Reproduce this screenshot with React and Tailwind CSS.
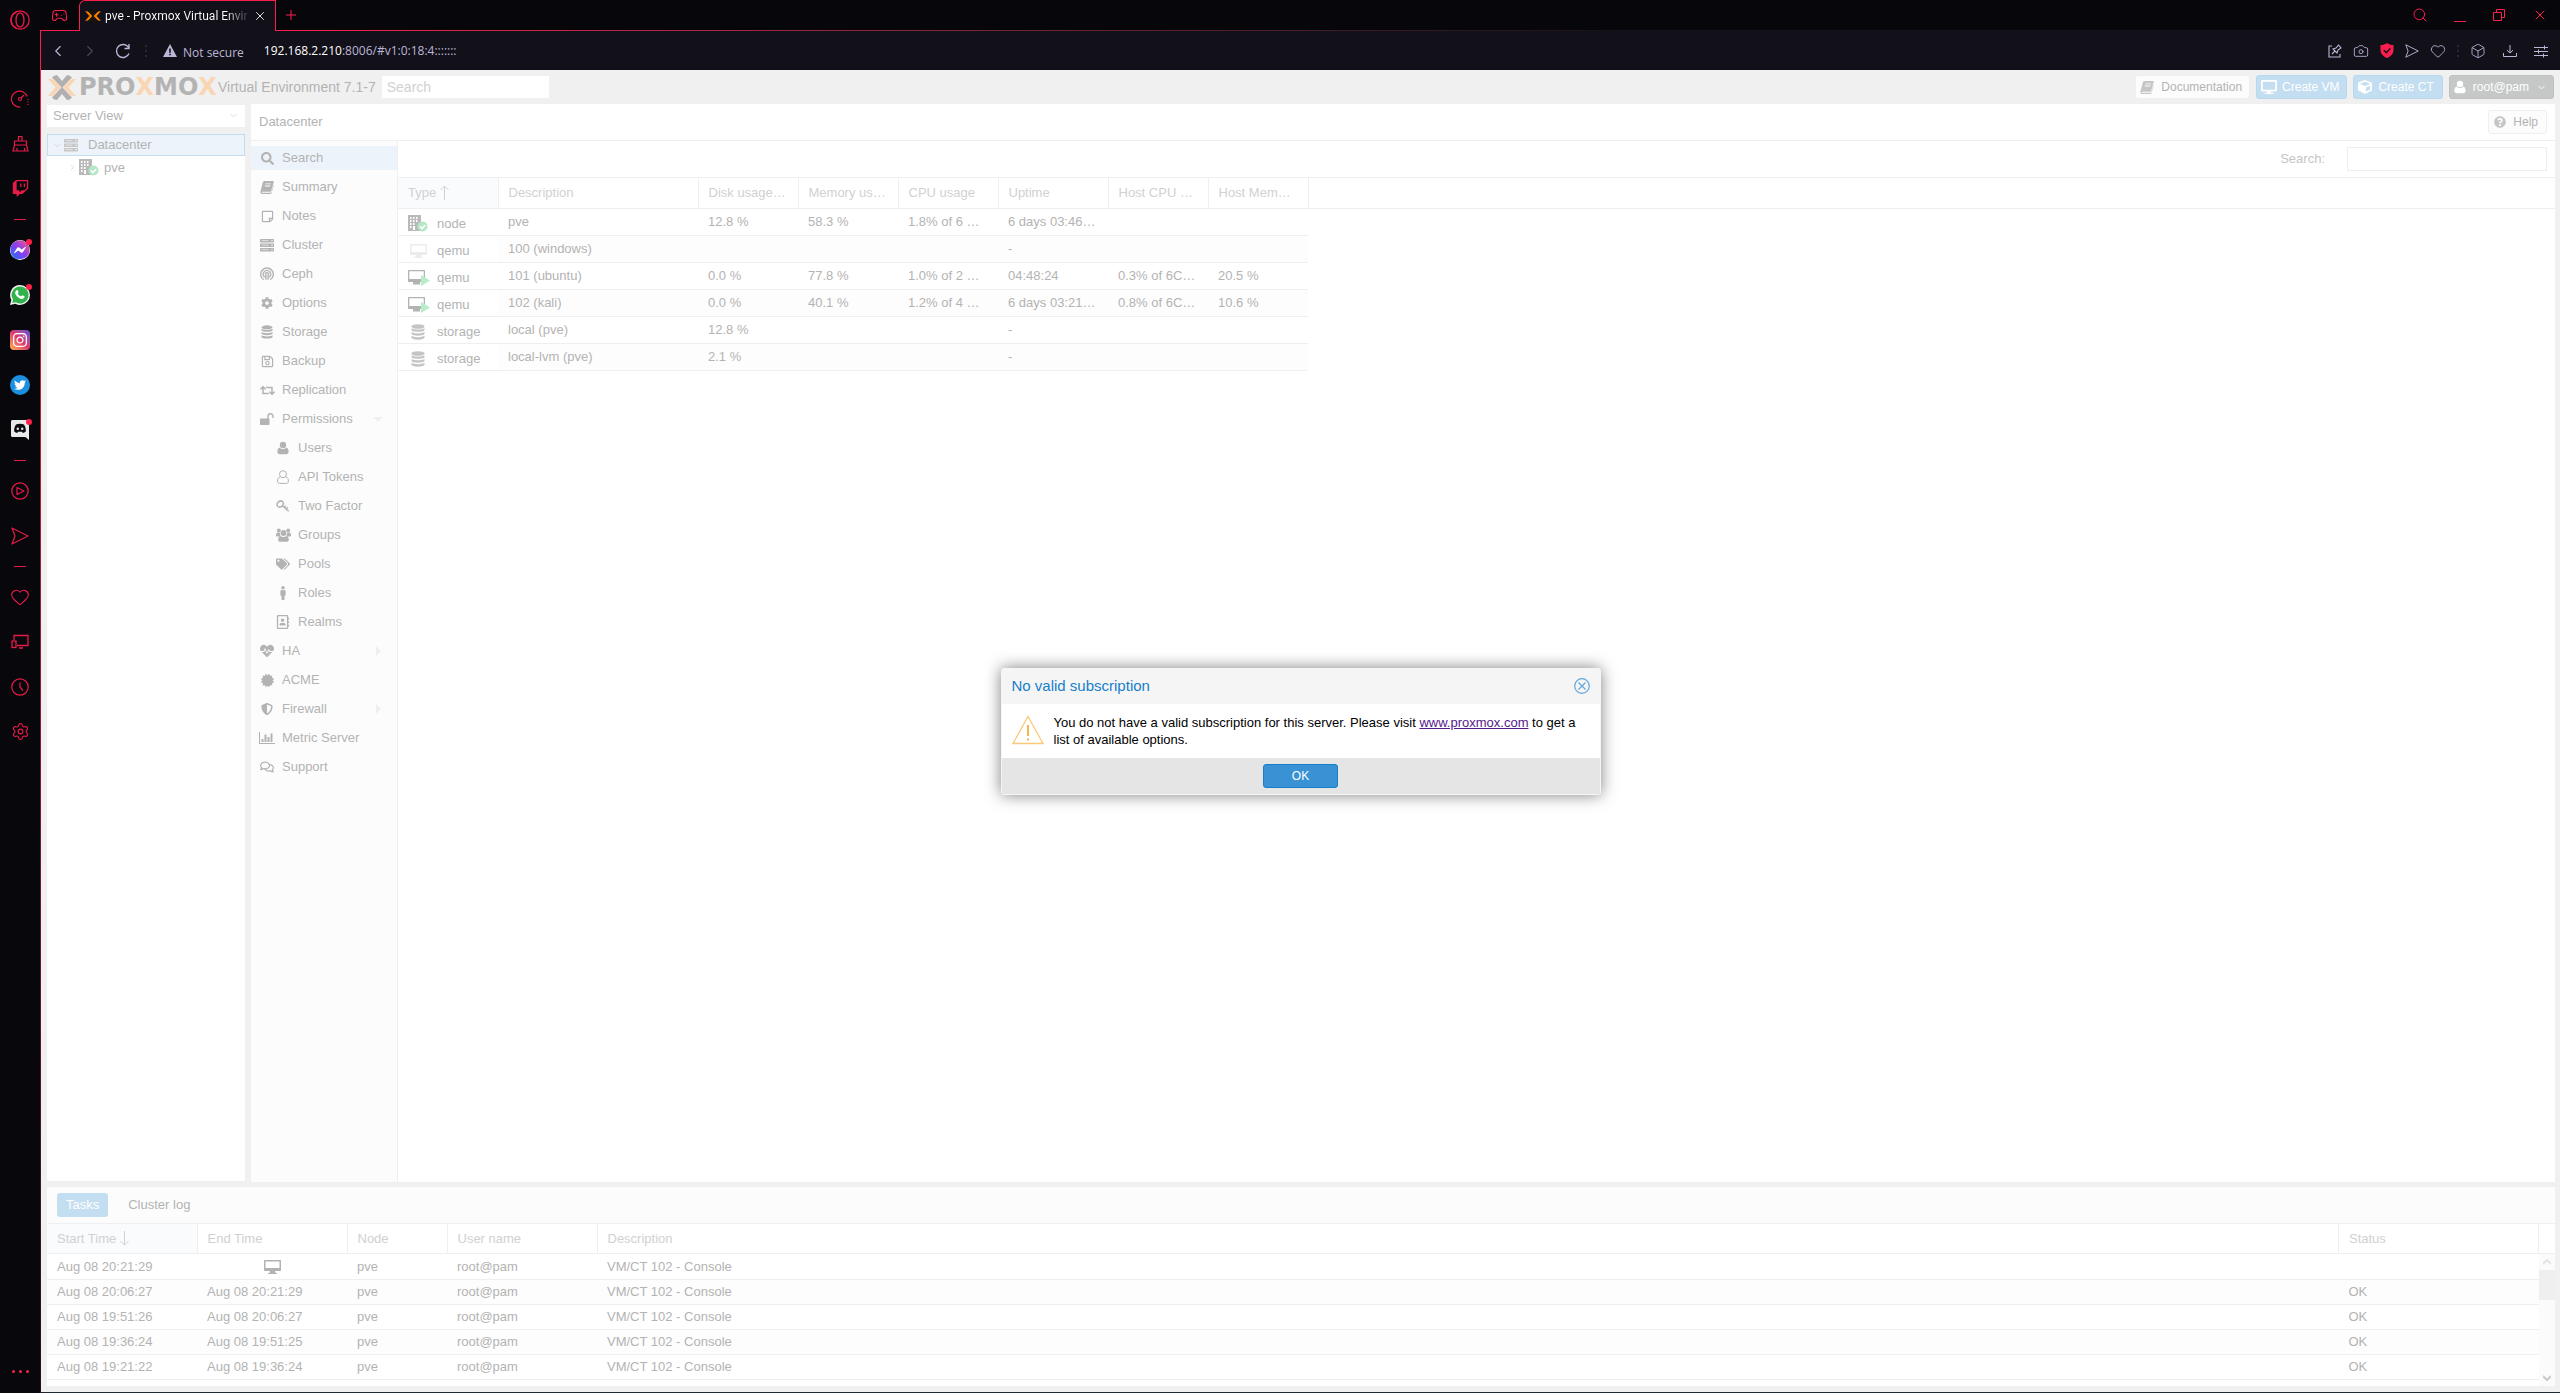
import React from "react";
import {
  FaSearch, FaRegStickyNote, FaCog, FaRegSave, FaRetweet, FaUsers, FaTags, FaMale, FaRegAddressBook,
  FaHeartbeat, FaCertificate, FaShieldAlt, FaRegComments, FaCube, FaQuestionCircle, FaDesktop,
  FaFacebookMessenger, FaInstagram, FaTwitter, FaTwitch,
} from "react-icons/fa";
import {
  Heart, Settings, Gamepad2, ChevronLeft, ChevronRight, ChevronDown,
  Camera, Box, Search, X, Plus,
} from "lucide-react";

/* ---------- icons ---------- */
const Svg = ({ w = 14, h = 14, vb, children, className = "" }) => (
  <svg width={w} height={h} viewBox={vb || `0 0 ${w} ${h}`} fill="currentColor" className={`shrink-0 ${className}`} aria-hidden="true">{children}</svg>
);
const Line = { fill: "none", stroke: "currentColor", strokeWidth: 1 };

const Book = () => (
  <Svg>
    <path d="M4.6 1h8.2c.8 0 1.1.5.9 1.2l-2.4 8.4c-.2.8-.8 1.2-1.6 1.2H2.4c-.5 0-.8.2-.8.5s.3.5.8.5h7.8c.6 0 1-.3 1.2-.9l2-7c.3.3.3.7.2 1.100l-1.900 6.400c-.3 1-1 1.500-1.900 1.500H2C.8 13.900.1 12.900.4 11.800L2.800 2.600C3.100 1.600 3.700 1 4.600 1zM5.500 3.500l-.2.8h5.600l.2-.8zM4.900 5.600l-.2.800h5.600l.2-.8z" fillRule="evenodd" />
  </Svg>
);
const Server = ({ w = 14 }) => (
  <Svg w={w} vb="0 0 14 14">
    {[1, 5.5, 10].map((y) => (
      <g key={y}>
        <rect x="0" y={y} width="14" height="3.500" rx=".4" />
        <path d={`M1.500 ${y + 1.200}h7v.9h-7z`} fill="#fcfcfc" opacity=".65" />
        <circle cx="12" cy={y + 1.700} r=".7" fill="#fcfcfc" />
      </g>
    ))}
  </Svg>
);
const Ceph = () => (
  <Svg>
    <g {...Line} strokeWidth="1.400">
      <path d="M3.800 12.700a6.300 6.300 0 1 1 6.400 0" />
      <path d="M4.800 10.300a3.800 3.800 0 1 1 4.400 0" />
      <path d="M5.900 12.800V8.200a1.500 1.500 0 1 1 2.200 0v4.600" />
    </g>
  </Svg>
);
const Database = ({ w = 14, h = 16 }) => (
  <Svg w={w} h={h} vb="0 0 14 16">
    <ellipse cx="7" cy="2.500" rx="6.500" ry="2.300" />
    <path d="M.5 4.200c2 1.800 11 1.800 13 0v2c-1 2.200-12 2.200-13 0zM.5 8c2 1.800 11 1.800 13 0v2c-1 2.200-12 2.200-13 0zM.5 11.800c2 1.800 11 1.800 13 0v2c-1 2.500-12 2.500-13 0z" />
  </Svg>
);
const Unlock = () => (
  <Svg>
    <rect x="0" y="6.500" width="9.500" height="6.500" rx=".7" />
    <path d="M8 7V4.200a2.500 2.500 0 0 1 5 0V6" {...Line} strokeWidth="1.400" />
  </Svg>
);
const User = ({ w = 12, h = 14 }) => (
  <Svg w={w} h={h} vb="0 0 12 14">
    <circle cx="6" cy="4" r="3.200" />
    <path d="M3 6.500c-2 .3-2.600 2.300-2.600 4.300 0 1.500.9 2.400 2.100 2.400h7c1.200 0 2.100-.9 2.100-2.400 0-2-.6-4-2.600-4.300C8 8.500 4 8.500 3 6.500z" />
  </Svg>
);
const UserO = () => (
  <Svg w={12} h={14}>
    <g {...Line}>
      <path d="M3.200 7C1 7.400.6 9.400.6 11c0 1.500.8 2.400 2.100 2.400h6.600c1.300 0 2.100-.9 2.100-2.400 0-1.600-.4-3.600-2.600-4" />
      <circle cx="6" cy="4.200" r="3.500" />
    </g>
  </Svg>
);
const Key = () => (
  <Svg>
    <g {...Line} strokeWidth="1.500">
      <ellipse cx="4.200" cy="5" rx="3.300" ry="2.700" transform="rotate(-40 4.200 5)" />
      <path d="M6.300 6.800l6.400 5.400M10.200 10l1.500-1.700M8.300 8.500L9.800 6.800" />
    </g>
  </Svg>
);
const Groups = () => (
  <Svg w={15} h={14}>
    <circle cx="2.800" cy="2.500" r="1.900" /><circle cx="12.200" cy="2.500" r="1.900" /><circle cx="7.500" cy="5" r="2.900" />
    <path d="M1.200 4.500C.3 5 0 6 0 7.500c0 .8.500 1 1.200 1h2.500L4.500 7.300 3.800 4.800zM13.800 4.500c.9.500 1.200 1.500 1.200 3 0 .8-.5 1-1.200 1h-2.500l-.8-1.200.7-2.500zM4.500 8c-1.500.3-2.300 1.500-2.300 3.700 0 1.300.8 2.100 2 2.100h6.600c1.200 0 2-.8 2-2.100 0-2.200-.8-3.400-2.300-3.700-1.500 1.400-4.500 1.400-6 0z" />
  </Svg>
);
const BarChart = () => (
  <Svg w={16}>
    <path d="M0 1h1v11h15v1H0zM2.500 8h2v3h-2zM5.500 3.500h2v7.500h-2zM8.500 6h2v5h-2zM11.500 2.500h2V11h-2z" />
  </Svg>
);
const Monitor = ({ className }) => (
  <Svg w={17} h={16} className={className}>
    <path d="M1 1h15c.6 0 1 .4 1 1v9c0 .6-.4 1-1 1h-5l.6 2H13v1H4v-1h1.400L6 12H1c-.6 0-1-.4-1-1V2c0-.6.4-1 1-1zm.5 1.500V9h14V2.500z" fillRule="evenodd" />
  </Svg>
);
const NodeIcon = () => (
  <Svg w={20} h={17}>
    <path fillRule="evenodd" d="M0 0h13v16H0zM2 2v2h1.500V2zm3 0v2h1.500V2zm3 0v2h1.500V2zM2 5v2h1.500V5zm3 0v2h1.500V5zm3 0v2h1.500V5zM2 8v2h1.500V8zm3 0v2h1.500V8zM2 11v2h1.500v-2zm3 0v4h2v-4z" fill="#b9b9b9" />
    <circle cx="14.500" cy="11.500" r="5" fill="#b4e8c4" />
    <path d="M12 11.500l2 2 3.200-3.500" fill="none" stroke="#fff" strokeWidth="1.600" />
  </Svg>
);
const RunningIcon = () => (
  <Svg w={22} h={17}>
    <path fillRule="evenodd" fill="#b3b3b3" d="M1 1h15c.6 0 1 .4 1 1v10c0 .6-.4 1-1 1h-4v2.500H5V13H1c-.6 0-1-.4-1-1V2c0-.6.4-1 1-1zm.3 1.300V10h14.400V2.300z" />
    <path d="M13 6l9 5.500-9 5.500z" fill="#b7eec7" />
  </Svg>
);
const XMark = ({ w, h, side, mid }) => (
  <Svg w={w} h={h} vb="0 0 28 25">
    <path d="M4 2.500Q6 0 9 0l5 6 5-6q3 0 5 2.500L14 13z" fill={mid} />
    <path d="M4 22.500Q6 25 9 25l5-6 5 6q3 0 5-2.500L14 12z" fill={mid} />
    <path d="M0 4h3q2 0 3.500 1.700L13 12.500l-6.500 6.800Q5 21 3 21H0l7.500-8.500z" fill={side} />
    <path d="M28 4h-3q-2 0-3.500 1.700L15 12.500l6.500 6.800Q23 21 25 21h3l-7.500-8.500z" fill={side} />
  </Svg>
);
const Opera = () => (
  <Svg w={20} h={20}>
    <g {...Line} strokeWidth="1.300"><circle cx="10" cy="10" r="9.200" /><ellipse cx="10" cy="10" rx="4" ry="7.200" /><path d="M6.500 1.800A9 9 0 0 0 6.500 18.200" /></g>
  </Svg>
);
const Gauge = () => (
  <Svg w={18} h={18}>
    <g {...Line} strokeWidth="1.200"><path d="M9.500 17A8 8 0 1 1 16 6.500" /><circle cx="9" cy="9" r="1.500" /><path d="M10 8l3-3" /><path d="M17 9v6" strokeDasharray="1 1.500" /></g>
  </Svg>
);
const Broom = () => (
  <Svg w={17} h={18}>
    <g {...Line} strokeWidth="1.200"><path d="M2.500 6h12v4h-12zM6.500 6V1.500h3.500V6M2.500 10L1 16h15l-1.500-6M5 16v-3M12.500 16v-3" /></g>
  </Svg>
);
const SendArrow = ({ w = 18 }) => (
  <Svg w={w} h={w} vb="0 0 18 18"><path d="M1 1l16 8-16 8 3-8z" {...Line} strokeWidth="1.200" strokeLinejoin="round" /></Svg>
);
const Devices = () => (
  <Svg w={18} h={15}><g {...Line} strokeWidth="1.300"><path d="M3 6V1.500h14v10H6M8 14h4" /><rect x="1" y="7" width="4" height="6.500" /></g></Svg>
);
const SortArrow = ({ down }) => (
  <Svg w={9} h={15} className={down ? "rotate-180" : ""}><path d="M4.500 15V1M.5 5l4-4 4 4" {...Line} /></Svg>
);

/* ---------- browser chrome ---------- */
const Slot = ({ label, children, dot }) => (
  <button aria-label={label} className="relative flex h-[45px] w-full shrink-0 items-center justify-center">
    {children}
    {dot && <span className="absolute top-3 right-2 size-1.5 rounded-full bg-[#ff1f4b]" />}
  </button>
);
const Dash = () => <div className="flex h-4 shrink-0 items-center"><span className="h-px w-3 bg-[#e61b48]" /></div>;

function Sidebar() {
  return (
    <aside className="flex w-10 shrink-0 flex-col items-center bg-[#08070c] text-[#e61b48]">
      <button aria-label="Opera menu" className="flex h-10 shrink-0 items-center"><Opera /></button>
      <div className="h-9 shrink-0" />
      <Slot label="Speed"><Gauge /></Slot>
      <Slot label="Cleaner"><Broom /></Slot>
      <Slot label="Twitch"><FaTwitch size={17} /></Slot>
      <Dash />
      <Slot label="Messenger" dot>
        <svg width="0" height="0" className="absolute"><defs>
          <linearGradient id="msg" x1="0" y1="1" x2="1" y2="0"><stop offset="0" stopColor="#0a7cff" /><stop offset=".5" stopColor="#8a3cf0" /><stop offset="1" stopColor="#ff5c7a" /></linearGradient>
        </defs></svg>
        <FaFacebookMessenger size={20} className="rounded-full bg-white fill-[url(#msg)]" />
      </Slot>
      <Slot label="WhatsApp" dot>
        <Svg w={20} h={20}>
          <path d="M10 0a10 10 0 0 1 0 20 10 10 0 0 1-4.600-1.200L0 20l1.400-5A10 10 0 0 1 10 0z" fill="#f4f4f4" />
          <path d="M10 1.500a8.500 8.500 0 1 1-4.300 15.800l-3.500.8.900-3.400A8.500 8.500 0 0 1 10 1.500z" fill="#32b24a" />
          <path d="M6.500 5.200c.8-.6 1.300-.1 2 1.700.2.600-.6 1-.7 1.500.8 1.500 1.700 2.300 3.200 2.900.6-.1 1-1.200 1.500-1 2.300 1 2.400 1.200 1.900 2.300-.8 1.500-2.700 1.700-4.600.8C7.600 12.400 6.200 10.900 5.400 9c-.6-1.500 0-3 1.100-3.800z" fill="#fff" />
        </Svg>
      </Slot>
      <Slot label="Instagram">
        <span className="flex size-5 items-center justify-center rounded-sm bg-linear-to-tr from-[#fdb347] via-[#e0356c] to-[#5b45d6] text-white"><FaInstagram size={16} /></span>
      </Slot>
      <Slot label="Twitter">
        <span className="flex size-5 items-center justify-center rounded-full bg-[#1b8fe0] text-white"><FaTwitter size={12} /></span>
      </Slot>
      <Slot label="Discord" dot>
        <Svg w={18} h={20}>
          <path d="M1.500 0h15c.8 0 1.500.7 1.500 1.500V20l-3.500-3h-13C.7 17 0 16.300 0 15.500v-14C0 .7.700 0 1.500 0z" fill="#e9e9e9" />
          <path d="M5 4.500c2.500-1 5.500-1 8 0 1.500 2.500 2 4.500 1.800 7-1 .9-2 1.300-3 1.500l-.8-1.300H7L6.200 13c-1-.2-2-.6-3-1.500C3 9 3.500 7 5 4.500z" fill="#0b0a10" />
          <circle cx="6.800" cy="8.800" r="1.200" fill="#e9e9e9" /><circle cx="11.200" cy="8.800" r="1.200" fill="#e9e9e9" />
        </Svg>
      </Slot>
      <Dash />
      <Slot label="Player">
        <Svg w={18} h={18}><g {...Line} strokeWidth="1.200"><circle cx="9" cy="9" r="8.200" /><path d="M6 5.500l7 3.500-7 3.500z" strokeLinejoin="round" /></g></Svg>
      </Slot>
      <Slot label="My Flow"><SendArrow /></Slot>
      <Dash />
      <Slot label="Favourites"><Heart size={20} strokeWidth={1.300} /></Slot>
      <Slot label="Devices"><Devices /></Slot>
      <Slot label="History">
        <Svg w={18} h={18}><g {...Line} strokeWidth="1.200"><circle cx="9" cy="9" r="8.200" /><path d="M9 4.500V9l3 3.500" /></g></Svg>
      </Slot>
      <Slot label="Settings"><Settings size={19} strokeWidth={1.400} /></Slot>
      <button aria-label="More" className="mt-auto mb-5 flex gap-1 text-[#fa1e4e]">
        <span className="size-[3px] rounded-full bg-current" /><span className="size-[3px] rounded-full bg-current" /><span className="size-[3px] rounded-full bg-current" />
      </button>
    </aside>
  );
}

function TabBar() {
  return (
    <div className="flex h-[31px] shrink-0 bg-[#07060b] text-[#fa1e4e]">
      <div className="flex w-[39px] items-center justify-center border-b border-[#fa1e4e]"><Gamepad2 size={17} strokeWidth={1.500} /></div>
      <div className="flex w-[197px] items-center gap-1 rounded-tl-md border-x border-t border-[#fa1e4e] bg-[#121019] pr-2 pl-[5px]">
        <XMark w={16} h={14} side="#f57c00" mid="#17120c" />
        <span className="bg-linear-to-r from-white from-85% to-[#33313a] bg-clip-text font-[Roboto,sans-serif] text-xs whitespace-nowrap text-transparent">pve - Proxmox Virtual Envir</span>
        <button aria-label="Close tab" className="ml-auto text-white"><X size={14} strokeWidth={1.500} /></button>
      </div>
      <div className="flex flex-1 flex-col">
        <div className="flex flex-1 items-center justify-between pr-3 pl-[7px]">
          <button aria-label="New tab"><Plus size={16} strokeWidth={1.500} /></button>
          <div className="flex items-center gap-[26px]">
            <button aria-label="Search tabs"><Search size={16} strokeWidth={1.500} /></button>
            <button aria-label="Minimize" className="flex h-3.5 w-3 items-end"><span className="h-px w-full bg-current" /></button>
            <button aria-label="Restore"><Svg w={14} h={14}><path d="M1.500 4.500h8v8h-8zM4.500 4.500v-3h8v8h-3" {...Line} /></Svg></button>
            <button aria-label="Close"><X size={16} strokeWidth={1.500} /></button>
          </div>
        </div>
        <div className="h-px bg-linear-to-r from-[#fa1e4e] to-[#121019] to-60%" />
      </div>
    </div>
  );
}

const Dots = () => (
  <span className="flex flex-col gap-[3px]"><i className="size-0.5 bg-[#2b2838]" /><i className="size-0.5 bg-[#2b2838]" /><i className="size-0.5 bg-[#2b2838]" /></span>
);

function AddressBar() {
  return (
    <div className="flex h-[39px] shrink-0 items-center bg-[#121019] pr-3 pl-2 text-[#bcb6d6]">
      <button aria-label="Back" className="w-4"><ChevronLeft size={18} strokeWidth={1.500} /></button>
      <button aria-label="Forward" className="ml-4 w-4 text-[#4b4858]"><ChevronRight size={18} strokeWidth={1.500} /></button>
      <button aria-label="Reload" className="ml-[18px]">
        <Svg w={16} h={16}><path d="M13.500 4.500A6.500 6.500 0 1 0 14 10.500M14 1v4.500H9.500" {...Line} strokeWidth="1.400" /></Svg>
      </button>
      <span className="mr-4 ml-3.5"><Dots /></span>
      <Svg w={14} h={13}><path fillRule="evenodd" d="M7 0l7 13H0zM6.200 4.500v4.300h1.600V4.500zm0 5.300v1.500h1.600V9.800z" /></Svg>
      <span className="ml-1.5 pt-1 font-['Open_Sans',sans-serif] text-xs">Not secure</span>
      <span className="ml-5 font-['Open_Sans',sans-serif] text-xs"><span className="text-white">192.168.2.210</span>:8006/#v1:0:18:4:::::::</span>
      <div className="ml-auto flex items-center gap-[11px]">
        <button aria-label="Pin page"><Svg><g {...Line} strokeWidth="1.100"><path d="M4 2H1v11h11v-3M4 10l3-3M5 5l4 4 1-3 3-2-2.500-3L8 4z" /></g></Svg></button>
        <button aria-label="Snapshot"><Camera size={16} strokeWidth={1.300} /></button>
        <button aria-label="Ad blocker"><Svg w={14} h={15}><path d="M7 0c2 1.500 4 2 6.500 2v5c0 4-3 6.500-6.500 8C3.500 13.500.5 11 .5 7V2C3 2 5 1.500 7 0z" fill="#fa1e4e" /><path d="M3.800 7.300l2.500 2.400 4-4.200" fill="none" stroke="#121019" strokeWidth="1.500" /></Svg></button>
        <button aria-label="Send"><SendArrow w={14} /></button>
        <button aria-label="Bookmark"><Heart size={16} strokeWidth={1.300} /></button>
        <Dots />
        <button aria-label="Extensions"><Box size={16} strokeWidth={1.300} /></button>
        <button aria-label="Downloads" className="mx-1.5"><Svg w={14}><path d="M.5 9v3.500h13V9M7 1v8M4 6.200L7 9l3-2.800" {...Line} /></Svg></button>
        <button aria-label="Easy setup"><Svg w={14}><path d="M0 3.500h14M0 7.500h14M0 11.500h14M10.500 1.500v4M4.500 5.500v4M9.500 9.500v4" {...Line} /></Svg></button>
      </div>
    </div>
  );
}

/* ---------- Proxmox page ---------- */
function Header() {
  return (
    <header className="flex h-[34px] shrink-0 items-center text-[#b3b3b3]">
      <div className="flex w-[170px] items-center gap-[3px] pl-px">
        <XMark w={28} h={25} side="#f9d5b4" mid="#b0b0b0" />
        <span className="font-['DejaVu_Sans',sans-serif] text-2xl leading-6 font-bold">PRO<b className="text-[#f9d5b4]">X</b>MO<b className="text-[#f9d5b4]">X</b></span>
      </div>
      <span className="ml-px text-sm">Virtual Environment 7.1-7</span>
      <input aria-label="Search resources" placeholder="Search" className="ml-1.5 h-[22px] w-[167px] bg-white px-[5px] text-sm outline-none placeholder:text-[#d1d1d1]" />
      <div className="ml-auto flex gap-1.5 pr-px text-xs">
        <button className="flex h-6 items-center gap-[7px] rounded-[3px] border border-[#efefef] bg-[#fcfcfc] pr-[7px] pl-1"><span className="text-[#c6c6c6]"><Book /></span>Documentation</button>
        <button className="flex h-6 items-center gap-[5px] rounded-[3px] border border-[#b7d8ef] bg-[#c4def1] pr-[7px] pl-1 text-white"><FaDesktop size={16} />Create VM</button>
        <button className="flex h-6 items-center gap-1.5 rounded-[3px] border border-[#b7d8ef] bg-[#c4def1] pr-2 pl-1 text-white"><FaCube size={14} />Create CT</button>
        <button className="flex h-6 items-center gap-[7px] rounded-[3px] border border-[#c0c2c1] bg-[#c6c8c7] pr-1.5 pl-1 text-white"><User />root@pam<ChevronDown size={11} strokeWidth={2} /></button>
      </div>
    </header>
  );
}

function Tree() {
  return (
    <div className="flex w-[198px] shrink-0 flex-col gap-[7px] pt-px pb-px text-[#b3b3b3]">
      <div className="relative">
        <select aria-label="View" className="block h-[22px] w-full appearance-none bg-white px-1.5 text-[13px] outline-none"><option>Server View</option></select>
        <span className="pointer-events-none absolute top-[5px] right-1.5 text-[#cfcfcf]"><ChevronDown size={11} strokeWidth={1.500} /></span>
      </div>
      <div className="flex-1 bg-white text-[13px]" role="tree">
        <div role="treeitem" className="flex h-[22px] items-center border border-[#bfdff0] bg-[#ecf3fa] pl-[5px]">
          <span className="text-[#cfcfcf]"><ChevronDown size={9} strokeWidth={2} /></span>
          <span className="ml-px text-[#c6c6c6]"><Server w={16} /></span><span className="ml-[9px]">Datacenter</span>
        </div>
        <div role="treeitem" className="flex h-[23px] items-center pl-[21px]">
          <span className="text-[#cfcfcf]"><ChevronRight size={9} strokeWidth={2} /></span>
          <span className="ml-0.5"><NodeIcon /></span><span className="ml-[5px]">pve</span>
        </div>
      </div>
    </div>
  );
}

const NAV = [
  ["Search", <FaSearch size={13} />], ["Summary", <Book />], ["Notes", <FaRegStickyNote size={13} />], ["Cluster", <Server />],
  ["Ceph", <Ceph />], ["Options", <FaCog size={12} />], ["Storage", <Database w={12} h={14} />], ["Backup", <FaRegSave size={13} />],
  ["Replication", <FaRetweet size={15} />], ["Permissions", <Unlock />, 0, "open"],
  ["Users", <User />, 1], ["API Tokens", <UserO />, 1], ["Two Factor", <Key />, 1], ["Groups", <Groups />, 1],
  ["Pools", <FaTags size={14} />, 1], ["Roles", <FaMale size={14} />, 1], ["Realms", <FaRegAddressBook size={14} />, 1],
  ["HA", <FaHeartbeat size={14} />, 0, "closed"], ["ACME", <FaCertificate size={13} />], ["Firewall", <FaShieldAlt size={12} />, 0, "closed"],
  ["Metric Server", <BarChart />], ["Support", <FaRegComments size={14} />],
];

function Nav() {
  return (
    <nav className="flex w-[147px] shrink-0 flex-col gap-[5px] border-r border-[#efefef] bg-[#fcfcfc] pt-[5px] text-[13px] text-[#b3b3b3]">
      {NAV.map(([label, icon, sub, state], i) => (
        <button key={label} className={`flex h-6 shrink-0 items-center text-left ${i === 0 ? "bg-[#ecf3fa]" : ""} ${sub ? "pl-6" : "pl-2"}`}>
          <span className="flex w-4 justify-center">{icon}</span>
          <span className="ml-[7px] flex-1">{label}</span>
          {state && (
            <span className="mr-3.5 flex w-2.5 justify-center text-[#efefef]">
              {state === "open" ? <Svg w={10} h={5}><path d="M0 0h10L5 5z" /></Svg> : <Svg w={5} h={10}><path d="M0 0v10l5-5z" /></Svg>}
            </span>
          )}
        </button>
      ))}
    </nav>
  );
}

const StorageIcon = () => <span className="flex w-5 justify-center text-[#c4c4c4]"><Database w={14} h={16} /></span>;
const RES = [
  [<NodeIcon />, "node", "pve", "12.8 %", "58.3 %", "1.8% of 6 …", "6 days 03:46…", "", ""],
  [<Monitor className="ml-0.5 text-[#ececec]" />, "qemu", "100 (windows)", "", "", "", "-", "", ""],
  [<RunningIcon />, "qemu", "101 (ubuntu)", "0.0 %", "77.8 %", "1.0% of 2 …", "04:48:24", "0.3% of 6C…", "20.5 %"],
  [<RunningIcon />, "qemu", "102 (kali)", "0.0 %", "40.1 %", "1.2% of 4 …", "6 days 03:21…", "0.8% of 6C…", "10.6 %"],
  [<StorageIcon />, "storage", "local (pve)", "12.8 %", "", "", "-", "", ""],
  [<StorageIcon />, "storage", "local-lvm (pve)", "2.1 %", "", "", "-", "", ""],
];
const RES_HEAD = ["Description", "Disk usage…", "Memory us…", "CPU usage", "Uptime", "Host CPU …", "Host Mem…"];

function ResourceTable() {
  return (
    <table className="w-full table-fixed text-left text-[13px] whitespace-nowrap text-[#b3b3b3]">
      <colgroup>
        <col className="w-[100px]" /><col className="w-[200px]" /><col className="w-[100px]" /><col className="w-[100px]" /><col className="w-[100px]" />
        <col className="w-[110px]" /><col className="w-[100px]" /><col className="w-[100px]" /><col />
      </colgroup>
      <thead className="text-[#d1d1d1]">
        <tr className="h-[30px] border-b border-[#efefef]">
          <th className="border-r border-[#efefef] bg-[#fafbfd] px-2.5 font-normal"><span className="flex items-center gap-1">Type <SortArrow /></span></th>
          {RES_HEAD.map((h) => <th key={h} className="border-r border-[#efefef] px-2.5 font-normal">{h}</th>)}
          <th />
        </tr>
      </thead>
      <tbody>
        {RES.map(([icon, type, ...cells], i) => (
          <tr key={i} className="h-[27px]">
            <td className="border-b border-[#efefef] pt-1 pl-2.5"><span className="flex items-center"><span className="flex w-[29px]">{icon}</span>{type}</span></td>
            {cells.map((c, j) => <td key={j} className={`border-b border-[#efefef] px-2.5 ${i % 2 ? "bg-[#fdfdfd]" : ""}`}>{c}</td>)}
            <td />
          </tr>
        ))}
      </tbody>
    </table>
  );
}

function Content() {
  return (
    <main className="flex min-w-0 flex-1 flex-col bg-white text-[#b3b3b3]">
      <div className="flex h-[37px] shrink-0 items-center justify-between border-b border-[#efefef] pr-2 pl-2">
        <h1 className="text-[13px]">Datacenter</h1>
        <button className="flex h-6 items-center gap-[7px] rounded-[3px] border border-[#efefef] bg-[#fcfcfc] pr-2 pl-[5px] text-xs"><FaQuestionCircle size={12} className="text-[#c6c6c6]" />Help</button>
      </div>
      <div className="flex min-h-0 flex-1">
        <Nav />
        <div className="min-w-0 flex-1">
          <div className="flex h-[37px] items-center justify-end border-b border-[#efefef] pr-2">
            <label htmlFor="filter" className="mr-[22px] text-[13px] text-[#c6c6c6]">Search:</label>
            <input id="filter" className="h-6 w-[200px] border border-[#efefef] bg-white px-1 text-[13px] outline-none" />
          </div>
          <ResourceTable />
        </div>
      </div>
    </main>
  );
}

const TASKS = [
  ["Aug 08 20:21:29", null, ""], ["Aug 08 20:06:27", "Aug 08 20:21:29", "OK"], ["Aug 08 19:51:26", "Aug 08 20:06:27", "OK"],
  ["Aug 08 19:36:24", "Aug 08 19:51:25", "OK"], ["Aug 08 19:21:22", "Aug 08 19:36:24", "OK"],
];

function Tasks() {
  return (
    <section className="shrink-0 bg-white text-[13px] text-[#b3b3b3]">
      <div className="flex h-[37px] items-center gap-2.5 border-b border-[#efefef] bg-[#fcfcfc] pl-2.5">
        <button className="h-6 rounded-[3px] bg-[#c4def1] px-[9px] text-white">Tasks</button>
        <button className="h-6 px-2.5">Cluster log</button>
      </div>
      <div className="flex">
        <div className="min-w-0 flex-1 pb-1.5">
          <table className="w-full table-fixed text-left whitespace-nowrap">
            <colgroup>
              <col className="w-[150px]" /><col className="w-[150px]" /><col className="w-[100px]" /><col className="w-[150px]" /><col /><col className="w-[200px]" />
            </colgroup>
            <thead className="text-[#d1d1d1]">
              <tr className="h-[30px] border-b border-[#efefef]">
                <th className="border-r border-[#efefef] bg-[#fafbfd] px-2.5 font-normal"><span className="flex items-center gap-1">Start Time <SortArrow down /></span></th>
                {["End Time", "Node", "User name", "Description", "Status"].map((h) => <th key={h} className="border-r border-[#efefef] px-2.5 font-normal">{h}</th>)}
              </tr>
            </thead>
            <tbody>
              {TASKS.map(([start, end, status], i) => (
                <tr key={start} className={`border-b border-[#efefef] ${i === 0 ? "h-[26px]" : "h-[25px]"} ${i % 2 ? "bg-[#fdfdfd]" : ""}`}>
                  <td className="px-2.5">{start}</td>
                  <td className="px-2.5">{end || <span className="flex justify-center"><Monitor /></span>}</td>
                  <td className="px-2.5">pve</td>
                  <td className="px-2.5">root@pam</td>
                  <td className="px-2.5">VM/CT 102 - Console</td>
                  <td className="px-2.5">{status}</td>
                </tr>
              ))}
            </tbody>
          </table>
        </div>
        <div className="flex w-4 flex-col">
          <div className="h-[30px] border-b border-[#efefef]" />
          <div className="flex flex-1 flex-col items-center bg-[#fbfbfb]">
            <span className="flex h-4 items-center text-[#e3e3e3]"><Svg w={8} h={6}><path d="M0 5l4-4 4 4" {...Line} strokeWidth="2" /></Svg></span>
            <span className="h-[30px] w-full bg-[#efefef]" />
            <span className="mt-auto flex h-4 items-center text-[#c8c8c8]"><Svg w={8} h={6}><path d="M0 1l4 4 4-4" {...Line} strokeWidth="2" /></Svg></span>
          </div>
        </div>
      </div>
    </section>
  );
}

function Dialog() {
  return (
    <div className="absolute inset-0 flex items-center justify-center">
      <div role="dialog" aria-labelledby="dlg" className="w-[600px] rounded-[3px] border border-[#f5f5f5] bg-white shadow-[0_0_16px_rgba(0,0,0,0.5)]">
        <div className="flex h-[35px] items-center justify-between bg-[#f5f5f5] px-2.5">
          <h2 id="dlg" className="text-[15px] text-[#157fcc]">No valid subscription</h2>
          <button aria-label="Close dialog" className="text-[#5ea6dc]"><Svg w={16} h={16}><g {...Line} strokeWidth="1.200"><circle cx="8" cy="8" r="7.300" /><path d="M4.500 4.500l7 7M11.500 4.500l-7 7" /></g></Svg></button>
        </div>
        <div className="flex gap-2.5 py-2.5 pr-5 pl-2.5">
          <Svg w={32} h={34}><path d="M16 2.500L31 29.500H1z" fill="none" stroke="#fbc878" strokeWidth="1.300" /><path d="M15 11h2v11h-2zM15 24.500h2v2h-2z" fill="#fbb44c" /></Svg>
          <p className="text-[13px] leading-[17px] text-black">You do not have a valid subscription for this server. Please visit <a href="https://www.proxmox.com" className="text-[#551a8b] underline">www.proxmox.com</a> to get a list of available options.</p>
        </div>
        <div className="flex h-9 items-center justify-center bg-[#e5e5e5]">
          <button className="h-6 w-[75px] rounded-[3px] border border-[#157fcc] bg-[#3892d4] text-xs text-white">OK</button>
        </div>
      </div>
    </div>
  );
}

export default function App() {
  return (
    <div className="flex h-screen overflow-hidden font-['Liberation_Sans',Arial,sans-serif]">
      <Sidebar />
      <div className="flex min-w-0 flex-1 flex-col">
        <TabBar />
        <div className="flex min-h-0 flex-1">
          <div className="w-px bg-linear-to-b from-[#fa1e4e] to-[#2a0d1a]" />
          <div className="flex min-w-0 flex-1 flex-col">
            <AddressBar />
            <div className="relative flex min-h-0 flex-1 flex-col border-b border-[#1b2a30] bg-[#f0f0f0] pr-[5px] pb-1.5 pl-1.5">
              <Header />
              <div className="mb-[5px] flex min-h-0 flex-1 gap-1.5">
                <Tree />
                <Content />
              </div>
              <Tasks />
              <Dialog />
            </div>
          </div>
        </div>
      </div>
    </div>
  );
}
